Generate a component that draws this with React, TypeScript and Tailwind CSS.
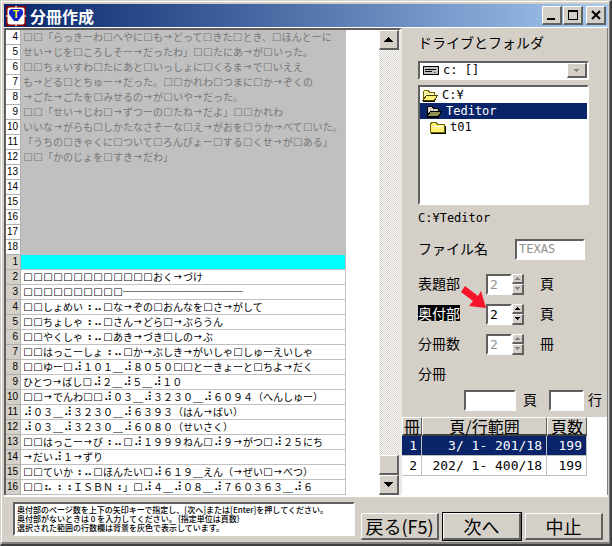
import React, { useState } from "react";

const JP = "font-['Noto_Sans_CJK_JP',sans-serif]";
const MONO = "font-['DejaVu_Sans_Mono','Noto_Sans_CJK_JP',monospace]";
const RAISED =
  "bg-[#d4d0c8] border-t border-l border-t-white border-l-white border-b-2 border-r-2 border-b-[#606060] border-r-[#606060]";
const SUNKEN =
  "border-t-2 border-l-2 border-t-[#606060] border-l-[#606060] border-b-2 border-r-2 border-b-white border-r-white";

const upper = [
  "□□「らっきーわ□へやに□も→どって□きた□とき、□ほんとーに",
  "せい→じを□ころしそー→だったわ」□□たにあ→が□いった。",
  "□□ちぇいすわ□たにあと□いっしょに□くるま→で□いええ",
  "も→どる□とちゅー→だった。□□かれわ□つまに□か→ぞくの",
  "→ごた→ごたを□みせるの→が□いや→だった。",
  "□□「せい→じわ□→ずつーの□たね→だよ」□□かれわ",
  "いいな→がらも□しかたなさそーな□え→がおを□うか→べて□いた。",
  "「うちの□きゃくに□ついて□ろんぴょー□する□くせ→が□ある」",
  "□□「かのじょを□すき→だわ」",
  "",
  "",
  "",
  "",
  "",
  "",
];

const lower = [
  "",
  "□□□□□□□□□□□□□おく→づけ",
  "□□□□□□□□□□────────────",
  "□□しょめい⠰⠤□な→ぞの□おんなを□さ→がして",
  "□□ちょしゃ⠰⠤□さん→どら□→ぶらうん",
  "□□やくしゃ⠰⠤□あき→づき□しの→ぶ",
  "□□はっこーしょ⠰⠤□か→ぶしき→がいしゃ□しゅーえいしゃ",
  "□□ゆー□⠼１０１＿⠼８０５０□□とーきょーと□ちよ→だく",
  "ひとつ→ばし□⠼２＿⠼５＿⠼１０",
  "□□→でんわ□□⠼０３＿⠼３２３０＿⠼６０９４（へんしゅー）",
  "⠼０３＿⠼３２３０＿⠼６３９３（はん→ばい）",
  "⠼０３＿⠼３２３０＿⠼６０８０（せいさく）",
  "□□はっこー→び⠰⠤□⠼１９９９ねん□⠼９→がつ□⠼２５にち",
  "→だい⠼１→ずり",
  "□□ていか⠰⠤□ほんたい□⠼６１９＿えん（→ぜい□→べつ）",
  "□□⠦⠰⠰ＩＳＢＮ⠰」□⠼４＿⠼０８＿⠼７６０３６３＿⠼６",
];

function Cells({ text }: { text: string }) {
  const parts = text.split(/([⠀-⣿→□])/u).filter(Boolean);
  return (
    <>
      {parts.map((p, i) =>
        p === "→" ? (
          <span key={i} className="w-[10px] text-center text-[8px] font-bold">→</span>
        ) : p === "□" ? (
          <span key={i} className="w-[10px] text-center font-['DejaVu_Sans',sans-serif] font-bold">□</span>
        ) : /[⠀-⣿]/u.test(p) ? (
          <span key={i} className="w-[10px] text-center font-['DejaVu_Sans',sans-serif] text-[12px]">{p}</span>
        ) : (
          <span key={i}>{p}</span>
        )
      )}
    </>
  );
}

function Triangle({ down, small, dim }: { down?: boolean; small?: boolean; dim?: boolean }) {
  return (
    <svg
      viewBox="0 0 9 5"
      className={`${small ? "h-[3px] w-[5px]" : "h-[5px] w-[9px]"} ${dim ? "text-[#808080]" : "text-black"}`}
      shapeRendering="crispEdges"
    >
      <path d={down ? "M0 0H9L5 5H4Z" : "M0 5H9L5 0H4Z"} fill="currentColor" />
    </svg>
  );
}

function Folder({ open, selected }: { open?: boolean; selected?: boolean }) {
  const fill = selected ? "#8f9157" : "#fff27a";
  return (
    <svg viewBox="0 0 16 13" className="h-[13px] w-4 shrink-0" shapeRendering="crispEdges">
      {open ? (
        <>
          <path d="M1 11.5V2.5L2.5 1.5H6.5L7.5 3.5H12.5V6" fill={selected ? "#d4d0c8" : "#fff8a8"} stroke={selected ? "#000" : "#6d6800"} />
          <path d="M1 11.5L4.5 6.5H15.5L12.5 11.5Z" fill={fill} stroke={selected ? "#000" : "#4a4600"} />
          <path d="M1 12.5H13" stroke="#000" />
        </>
      ) : (
        <>
          <path d="M.5 11.5V3.5L1.5 1.5H6.5L7.5 3.5H14.5V11.5Z" fill={fill} stroke="#6d6800" />
          <path d="M2 5H13" stroke="#fff" />
          <path d="M1 12.5H15.5V4.5" stroke="#000" fill="none" />
        </>
      )}
    </svg>
  );
}

function TitleBar() {
  const btn = `flex h-[19px] w-5 items-center justify-center ${RAISED}`;
  return (
    <header className="flex h-[23px] items-center bg-linear-to-r from-[#0a246a] to-[#a6caf0] px-0.5">
      <svg viewBox="0 0 20 20" className="h-5 w-5" role="img" aria-label="T">
        <rect width="20" height="20" fill="#800000" />
        <rect x="1.5" y="1.5" width="17" height="17" rx="2" fill="#fff" />
        <path d="M9 0h2v2H9zM9 18h2v2H9zM0 9h2v2H0zM18 9h2v2h-2z" fill="#e0b0b0" />
        <path d="M3 5L5 3H15L17 5V8L12 15H8L3 8Z" fill="#1424c8" />
        <text x="10" y="12" textAnchor="middle" fontSize="10" fontWeight="bold" fill="#ff0" fontFamily="Liberation Sans">T</text>
      </svg>
      <h1 className="ml-1 flex-1 text-[16px] leading-5 font-bold text-white">分冊作成</h1>
      <button aria-label="最小化" className={btn}>
        <svg viewBox="0 0 12 12" className="h-3 w-3" shapeRendering="crispEdges"><path d="M1 9h8v2H1z" /></svg>
      </button>
      <button aria-label="最大化" className={`mx-px ${btn}`}>
        <svg viewBox="0 0 12 12" className="h-3 w-3" shapeRendering="crispEdges"><path d="M1 1h10v10H1zM2 3v7h8V3z" fillRule="evenodd" /></svg>
      </button>
      <button aria-label="閉じる" className={`ml-0.5 ${btn}`}>
        <svg viewBox="0 0 12 12" className="h-3 w-3"><path d="M2 2L10 10M10 2L2 10" stroke="#000" strokeWidth="2" /></svg>
      </button>
    </header>
  );
}

function Preview() {
  const num =
    "flex w-[15px] shrink-0 items-center justify-end border-r border-b border-[#b0b0b0] pr-0.5 font-['Liberation_Sans',sans-serif] text-[10px] leading-3 font-medium";
  return (
    <section className="flex min-w-0 flex-1 border-t-2 border-r-3 border-l-2 border-t-[#606060] border-r-[#ebe9e4] border-l-[#606060] bg-white">
      <div className="min-w-0 flex-1">
        <div className="mr-[33px] text-[10px] leading-[14px] whitespace-nowrap">
          {upper.map((t, i) => (
            <div key={i} className="flex h-[15px]">
              <span className={`bg-white ${num}`}>{i + 4}</span>
              <span className="flex flex-1 bg-[#c0c0c0] pl-0.5 text-[#777]"><Cells text={t} /></span>
            </div>
          ))}
          {lower.map((t, i) => (
            <div key={i} className="flex h-[15px]">
              <span className={`bg-[#d4d0c8] ${num}`}>{i + 1}</span>
              <span className={`flex flex-1 border-r border-b border-[#c0c0c0] pl-0.5 text-black ${i === 0 ? "bg-[#00ffff]" : "bg-white"}`}>
                <Cells text={t} />
              </span>
            </div>
          ))}
        </div>
      </div>
      <div className="flex w-5 flex-col bg-[repeating-conic-gradient(#d4d0c8_0_25%,#ffffff_0_50%)] bg-[length:2px_2px]">
        <button aria-label="上へ" className={`flex h-5 items-center justify-center ${RAISED}`}><Triangle /></button>
        <div className="flex-1" />
        <div className={`h-5 ${RAISED}`} />
        <button aria-label="下へ" className={`flex h-5 items-center justify-center ${RAISED}`}><Triangle down /></button>
      </div>
    </section>
  );
}

function CountRow({ id, label, unit, active }: { id: string; label: string; unit: string; active?: boolean }) {
  const [value, setValue] = useState(2);
  const step = `flex flex-1 items-center justify-center ${RAISED}`;
  return (
    <div className="flex h-[30px] items-center">
      <label htmlFor={id} className="flex w-[68px] pb-0.5">
        <span className={active ? "bg-black leading-4 text-white" : "leading-4"}>{label}</span>
      </label>
      <input
        id={id}
        value={value}
        readOnly
        disabled={!active}
        className={`h-[21px] w-[26px] bg-white pl-0.5 text-[13px] ${MONO} ${SUNKEN} ${active ? "text-black" : "text-[#909090]"}`}
      />
      <div className="flex h-[21px] w-3 flex-col">
        <button aria-label={`${label}を増やす`} disabled={!active} onClick={() => setValue(value + 1)} className={step}><Triangle small dim={!active} /></button>
        <button aria-label={`${label}を減らす`} disabled={!active} onClick={() => setValue(value - 1)} className={step}><Triangle small down dim={!active} /></button>
      </div>
      <span className="ml-4 pb-0.5 leading-4">{unit}</span>
    </div>
  );
}

function Settings() {
  const th = "h-[19px] border-t border-l border-r border-b-2 border-t-white border-l-white border-r-[#606060] border-b-[#404040] bg-[#d4d0c8] p-0 text-[16px] leading-4 font-normal";
  const td = "h-5 border-r border-b border-[#c0c0c0] p-0 pr-1 text-right";
  return (
    <section className="flex w-[206px] shrink-0 flex-col border-r border-[#808080] text-[14px] leading-5">
      <div className="relative pr-[18px] pl-4 pt-1">
        <label htmlFor="drive" className="block">ドライブとフォルダ</label>
        <div className={`relative mt-[9px] flex h-[19px] bg-white ${SUNKEN}`}>
          <select id="drive" className={`w-full appearance-none pl-[23px] text-[12px] leading-[15px] ${MONO}`}>
            <option>c: []</option>
          </select>
          <svg viewBox="0 0 16 9" className="pointer-events-none absolute top-[3px] left-[3px] h-[9px] w-4" shapeRendering="crispEdges">
            <rect x=".5" y=".5" width="15" height="8" rx="1" fill="#c0c0c0" stroke="#000" />
            <path d="M2 3.5H13M2 5.5H9" stroke="#000" />
            <path d="M11 6h2" stroke="#808080" />
          </svg>
          <span className={`pointer-events-none absolute top-0 right-0 flex h-[15px] w-5 items-center justify-center ${RAISED}`}>
            <Triangle small down dim />
          </span>
        </div>
        <ul className={`mt-[5px] h-[120px] bg-white text-[12px] leading-4 ${MONO} ${SUNKEN}`}>
          <li><button className="flex h-4 w-full items-center gap-1 pl-0.5"><Folder open />C:¥</button></li>
          <li><button className="flex h-4 w-full items-center gap-1 bg-[#0a246a] pl-1.5 text-white"><Folder open selected />Teditor</button></li>
          <li><button className="flex h-4 w-full items-center gap-1 pl-[10px]"><Folder />t01</button></li>
        </ul>
        <p className={`mt-[3px] text-[12px] leading-5 ${MONO}`}>C:¥Teditor</p>
        <div className="mt-[10px] flex items-center justify-between">
          <label htmlFor="file" className="pb-0.5">ファイル名</label>
          <input id="file" disabled value="TEXAS" className={`mr-1 h-[21px] w-[70px] bg-white pl-0.5 text-[12px] text-[#909090] ${MONO} ${SUNKEN}`} />
        </div>
        <div className="mt-[9px]">
          <CountRow id="front" label="表題部" unit="頁" />
          <CountRow id="back" label="奥付部" unit="頁" active />
          <CountRow id="volumes" label="分冊数" unit="冊" />
        </div>
        <p className="h-7 pt-1">分冊</p>
        <svg viewBox="0 0 26 23" className="pointer-events-none absolute top-[258px] left-[59px] h-[23px] w-[26px]">
          <path d="M4 0L17 10L20 5L25 22L8 20L12 15L0 6Z" fill="#f5142a" />
        </svg>
      </div>
      <div className="mt-0.5 flex items-center pl-[62px]">
        <input id="page" className={`h-[21px] w-[52px] bg-white ${SUNKEN}`} />
        <label htmlFor="page" className="ml-[7px] pb-0.5">頁</label>
        <input id="line" className={`ml-3 h-[21px] w-[35px] bg-white ${SUNKEN}`} />
        <label htmlFor="line" className="ml-1 pb-0.5">行</label>
      </div>
      <div className="mt-[6px] flex-1 bg-white">
        <table className="w-[185px] table-fixed border-separate border-spacing-0">
          <thead>
            <tr>
              <th className={`w-5 ${th}`}>冊</th>
              <th className={th}>頁/行範囲</th>
              <th className={`w-10 ${th}`}>頁数</th>
            </tr>
          </thead>
          <tbody className={`text-[13px] leading-4 whitespace-pre ${MONO}`}>
            <tr className="bg-[#0a246a] text-white">
              <td className={td}>1</td><td className={td}>3/ 1- 201/18</td><td className={td}>199</td>
            </tr>
            <tr>
              <td className={td}>2</td><td className={td}>202/ 1- 400/18</td><td className={td}>199</td>
            </tr>
          </tbody>
        </table>
      </div>
    </section>
  );
}

export default function App() {
  const action = `h-[27px] w-[78px] text-[18px] leading-5 whitespace-nowrap ${RAISED}`;
  return (
    <main className={`border-t border-l border-r-2 border-b-2 border-t-[#d4d0c8] border-l-[#d4d0c8] border-r-[#404040] border-b-[#404040] bg-[#d4d0c8] text-black ${JP}`}>
      <div className="border-t border-l border-r border-b-2 border-t-white border-l-white border-r-[#808080] border-b-[#808080] pt-0.5 pr-px pl-0.5">
        <TitleBar />
        <div className="flex border-t border-white">
          <Preview />
          <Settings />
        </div>
        <footer className="flex h-[47px] gap-1 border-t-2 border-white pr-[5px] pl-[9px]">
          <p className={`mt-[5px] mr-[2px] h-[34px] min-w-0 flex-1 overflow-hidden bg-white py-px pl-0.5 text-[8px] leading-[9px] font-medium whitespace-nowrap ${SUNKEN}`}>
            奥付部のページ数を上下の矢印キーで指定し、[次へ]または[Enter]を押してください。<br />
            奥付部がないときは 0 を入力してください。｛指定単位は頁数｝<br />
            選択された範囲の行数欄は背景を灰色で表示しています。
          </p>
          <button className={`mt-4 ${action}`}>戻る(F5)</button>
          <button className={`mt-4 outline outline-black ${action}`}>次へ</button>
          <button className={`mt-4 ${action}`}>中止</button>
        </footer>
      </div>
    </main>
  );
}
